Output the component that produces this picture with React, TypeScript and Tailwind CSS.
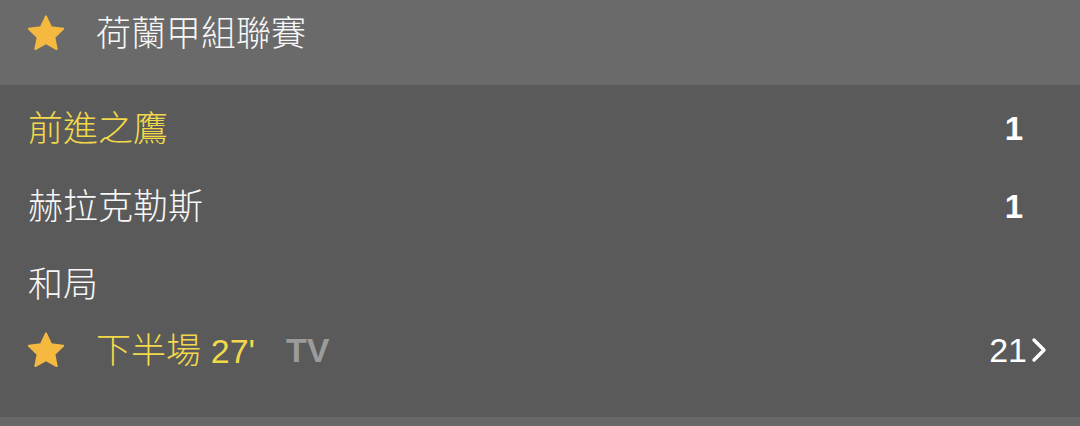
import React from "react";

const Star = () => (
  <svg width="40" height="39" viewBox="0 0 24 23" className="shrink-0">
    <path
      d="M12 1.2l3.1 6.6 7.2.9-5.3 5 1.4 7.1L12 17.3l-6.4 3.5 1.4-7.1-5.3-5 7.2-.9z"
      fill="#f5b940"
      stroke="#f5b940"
      strokeWidth="1.2"
      strokeLinejoin="round"
    />
  </svg>
);

export default function App() {
  const font = { fontFamily: '"Liberation Sans", "Noto Sans CJK TC", sans-serif' };
  return (
    <div className="w-[1080px] h-[426px] bg-[#686868] overflow-hidden" style={font}>
      <div className="h-[85px] bg-[#6a6a6a]">
        <div className="h-[66px] flex items-center pl-[26px] gap-[30px]">
          <Star />
          <span className="text-[35px] font-light text-[#f7f7f7] leading-none">荷蘭甲組聯賽</span>
        </div>
      </div>
      <div className="h-[332px] bg-[#5a5a5a] pt-[4px]">
        <div className="h-[78px] flex items-center justify-between pl-[28px] pr-[57px]">
          <span className="text-[35px] font-light text-[#f2d94c] leading-none">前進之鷹</span>
          <span className="text-[33px] font-bold text-white leading-none">1</span>
        </div>
        <div className="h-[78px] flex items-center justify-between pl-[28px] pr-[57px]">
          <span className="text-[35px] font-light text-[#f7f7f7] leading-none">赫拉克勒斯</span>
          <span className="text-[33px] font-bold text-white leading-none">1</span>
        </div>
        <div className="h-[78px] flex items-center pl-[28px]">
          <span className="text-[35px] font-light text-[#f7f7f7] leading-none">和局</span>
        </div>
        <div className="h-[54px] flex items-center justify-between pl-[26px] pr-[33px]">
          <div className="flex items-center">
            <Star />
            <span className="ml-[30px] text-[35px] font-light text-[#f2d94c] leading-none">
              下半場 <span className="text-[34px]">27'</span>
            </span>
            <span className="ml-[31px] text-[34px] font-bold text-[#9b9b9b] leading-none">TV</span>
          </div>
          <div className="flex items-center">
            <span className="text-[34px] text-white leading-none">21</span>
            <svg width="16" height="26" viewBox="0 0 16 26" className="ml-[4px]">
              <polyline
                points="3,3 13,13 3,23"
                fill="none"
                stroke="#ffffff"
                strokeWidth="3.4"
                strokeLinecap="round"
                strokeLinejoin="round"
              />
            </svg>
          </div>
        </div>
      </div>
    </div>
  );
}
